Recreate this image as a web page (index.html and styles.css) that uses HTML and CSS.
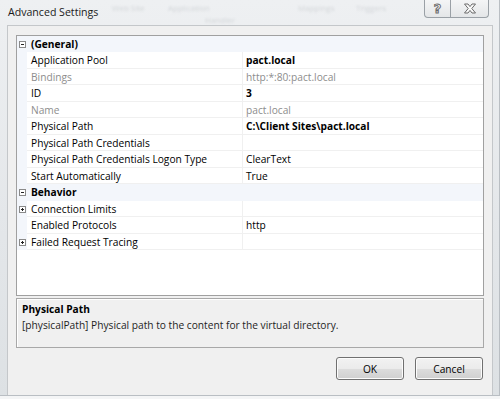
FILE: index.html
```html
<!DOCTYPE html>
<html lang="en">
<head>
  <meta charset="UTF-8">
  <title>Advanced Settings</title>
  <link rel="stylesheet" href="styles.css">
</head>
<body>
  <div class="window">
    <div class="titlebar">
      <div class="glass">
        <span class="ghost g1">Web Site</span>
        <span class="ghost g2">Handler</span>
        <span class="ghost g3">Application</span>
        <span class="ghost g4">Mappings</span>
        <span class="ghost g5">Triggers</span>
      </div>
      <span class="title">Advanced Settings</span>
      <div class="caption-buttons">
        <span class="cap-btn help">?</span>
        <span class="cap-btn close">
          <svg width="14" height="11" viewBox="0 0 14 11">
            <path d="M1.5 1 L5 1 L7 3.6 L9 1 L12.5 1 L8.8 5.5 L12.5 10 L9 10 L7 7.4 L5 10 L1.5 10 L5.2 5.5 Z" fill="#fafafa" stroke="#6b6b6b" stroke-width="1"/>
          </svg>
        </span>
      </div>
    </div>

    <div class="client">
      <div class="grid">
        <div class="row category">
          <span class="gutter"><span class="expander minus"></span></span>
          <span class="name">(General)</span>
        </div>
        <div class="row">
          <span class="gutter"></span>
          <span class="name">Application Pool</span>
          <span class="value bold">pact.local</span>
        </div>
        <div class="row readonly">
          <span class="gutter"></span>
          <span class="name">Bindings</span>
          <span class="value">http:*:80:pact.local</span>
        </div>
        <div class="row">
          <span class="gutter"></span>
          <span class="name">ID</span>
          <span class="value bold">3</span>
        </div>
        <div class="row readonly">
          <span class="gutter"></span>
          <span class="name">Name</span>
          <span class="value">pact.local</span>
        </div>
        <div class="row">
          <span class="gutter"></span>
          <span class="name">Physical Path</span>
          <span class="value bold">C:\Client Sites\pact.local</span>
        </div>
        <div class="row">
          <span class="gutter"></span>
          <span class="name">Physical Path Credentials</span>
          <span class="value"></span>
        </div>
        <div class="row">
          <span class="gutter"></span>
          <span class="name">Physical Path Credentials Logon Type</span>
          <span class="value">ClearText</span>
        </div>
        <div class="row">
          <span class="gutter"></span>
          <span class="name">Start Automatically</span>
          <span class="value">True</span>
        </div>
        <div class="row category">
          <span class="gutter"><span class="expander minus"></span></span>
          <span class="name">Behavior</span>
        </div>
        <div class="row">
          <span class="gutter"><span class="expander plus"></span></span>
          <span class="name">Connection Limits</span>
          <span class="value"></span>
        </div>
        <div class="row">
          <span class="gutter"></span>
          <span class="name">Enabled Protocols</span>
          <span class="value">http</span>
        </div>
        <div class="row">
          <span class="gutter"><span class="expander plus"></span></span>
          <span class="name">Failed Request Tracing</span>
          <span class="value"></span>
        </div>
      </div>

      <div class="description">
        <div class="desc-title">Physical Path</div>
        <div class="desc-text">[physicalPath] Physical path to the content for the virtual directory.</div>
      </div>

      <div class="buttons">
        <button class="button">OK</button>
        <button class="button">Cancel</button>
      </div>
    </div>
  </div>
</body>
</html>
```

FILE: styles.css
```css
html, body {
  margin: 0;
  padding: 0;
}
body {
  width: 500px;
  height: 399px;
  overflow: hidden;
  font-family: "Open Sans", "Noto Sans", sans-serif;
  font-size: 10.2px;
  color: #000;
  background: #f4f5f6;
}
.window {
  height: 396px;
  display: flex;
  flex-direction: column;
  background: linear-gradient(to bottom, #eef0f2, #e3e6e9 60%, #dde1e4);
  border-right: 1px solid #b9bec3;
  border-bottom: 1px solid #b9bec3;
  box-sizing: border-box;
}
.titlebar {
  position: relative;
  height: 25px;
  display: flex;
  justify-content: space-between;
  align-items: flex-start;
  flex-shrink: 0;
}
.glass {
  position: absolute;
  inset: 0;
  overflow: hidden;
  filter: blur(1.2px);
}
.ghost {
  position: absolute;
  font-size: 8px;
  color: #d3d6d9;
}
.g1 { left: 112px; top: 2px; }
.g2 { left: 205px; top: 14px; }
.g3 { left: 168px; top: 2px; }
.g4 { left: 298px; top: 2px; }
.g5 { left: 356px; top: 2px; }
.title {
  position: relative;
  margin: 5px 0 0 8px;
  font-size: 10.6px;
  color: #1b1b1b;
}
.caption-buttons {
  position: relative;
  display: flex;
  margin-right: 10px;
  height: 18px;
  border: 1px solid #9aa0a6;
  border-top: none;
  border-radius: 0 0 4px 4px;
  background: linear-gradient(to bottom, #f4f5f6, #e4e6e8);
  box-sizing: border-box;
}
.cap-btn {
  display: flex;
  align-items: center;
  justify-content: center;
  height: 17px;
}
.help {
  width: 25px;
  border-right: 1px solid #9aa0a6;
  font-size: 13px;
  font-weight: bold;
  color: #fafafa;
  -webkit-text-stroke: 1px #6b6b6b;
  font-family: "DejaVu Sans", sans-serif;
}
.close {
  width: 37px;
}
.client {
  flex: 1;
  margin: 0 6px 0 7px;
  padding: 9px 8px 0 8px;
  background: #f0f0f0;
  border: 1px solid #c4c7ca;
  border-bottom: none;
  display: flex;
  flex-direction: column;
}
.grid {
  height: 261px;
  border: 1px solid #a0a0a0;
  background: #fff;
  box-sizing: border-box;
}
.row {
  display: flex;
  height: 16px;
  line-height: 16px;
}
.row:nth-child(even) {
  height: 17px;
  line-height: 17px;
}
.gutter {
  width: 10px;
  flex-shrink: 0;
  background: #f3f6fb;
  display: flex;
  align-items: center;
  justify-content: center;
}
.name {
  width: 216px;
  flex-shrink: 0;
  padding-left: 4px;
  box-sizing: border-box;
  border-bottom: 1px solid #f0f0f0;
  border-right: 1px solid #f0f0f0;
  white-space: nowrap;
  overflow: hidden;
}
.value {
  flex: 1;
  padding-left: 3px;
  border-bottom: 1px solid #f0f0f0;
  white-space: nowrap;
}
.bold {
  font-weight: bold;
}
.readonly {
  color: #8d8d8d;
}
.category {
  background: #f3f6fb;
}
.category .name {
  flex: 1;
  border: none;
  font-weight: bold;
}
.expander {
  position: relative;
  width: 7px;
  height: 7px;
  border: 1px solid #8a8a8a;
  box-sizing: border-box;
  background: #fff;
}
.expander::before {
  content: "";
  position: absolute;
  left: 1px;
  top: 2px;
  width: 3px;
  height: 1px;
  background: #222;
}
.plus::after {
  content: "";
  position: absolute;
  left: 2px;
  top: 1px;
  width: 1px;
  height: 3px;
  background: #222;
}
.description {
  height: 50px;
  margin-top: 2px;
  padding: 3px 5px;
  border: 1px solid #a8a8a8;
  box-shadow: inset 1px 1px 0 #fff;
  box-sizing: border-box;
}
.desc-title {
  font-weight: bold;
  line-height: 15px;
}
.desc-text {
  line-height: 16px;
  color: #1e1e1e;
}
.buttons {
  display: flex;
  justify-content: flex-end;
  gap: 11px;
  margin-top: 9px;
  padding-right: 1px;
}
.button {
  width: 68px;
  height: 23px;
  font-family: inherit;
  font-size: 10.2px;
  color: #000;
  border: 1px solid #707070;
  border-radius: 3px;
  background: linear-gradient(to bottom, #f2f2f2 0%, #ebebeb 50%, #dddddd 51%, #cfcfcf 100%);
  box-shadow: inset 0 0 0 1px #fcfcfc;
  padding: 0;
}
```
